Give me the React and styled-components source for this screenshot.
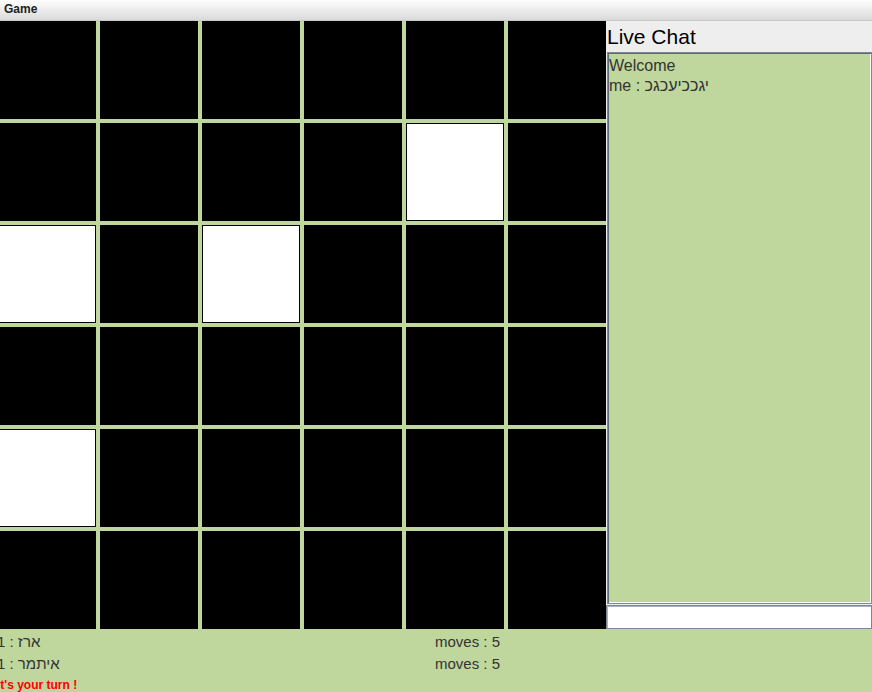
import styled, { createGlobalStyle } from "styled-components";

const GlobalStyle = createGlobalStyle`
  html, body {
    margin: 0;
    padding: 0;
    background: #bfd69d;
    overflow: hidden;
  }
`;

const whiteCells = ["1-4", "2-0", "2-2", "4-0"];

const App = () => {
  const rows = [0, 1, 2, 3, 4, 5];
  return (
    <Window>
      <GlobalStyle />
      <TitleBar>Game</TitleBar>
      <Main>
        <BoardArea>
          <Board>
            {rows.map(r =>
              rows.map(c => (
                <Cell key={`${r}-${c}`} $white={whiteCells.includes(`${r}-${c}`)} />
              ))
            )}
          </Board>
        </BoardArea>
        <ChatPanel>
          <ChatTitle>Live Chat</ChatTitle>
          <ChatLog>
            <div>Welcome</div>
            <div>me : יגככיעכגכ</div>
          </ChatLog>
          <ChatInput />
        </ChatPanel>
      </Main>
      <Footer>
        <Info>1 : ארז</Info>
        <Info>moves : 5</Info>
        <Info>1 : איתמר</Info>
        <Info>moves : 5</Info>
        <Turn>It's your turn !</Turn>
      </Footer>
    </Window>
  );
};

const Window = styled.div`
  width: 872px;
  height: 692px;
  display: flex;
  flex-direction: column;
  background: #bfd69d;
  overflow: hidden;
  font-family: "Liberation Sans", Arial, sans-serif;
`;

const TitleBar = styled.div`
  flex-shrink: 0;
  height: 20px;
  line-height: 18px;
  padding-left: 4px;
  border-bottom: 1px solid #c8c8c8;
  background: linear-gradient(#fefefe, #dadada);
  font-size: 12px;
  font-weight: 700;
  color: #222;
`;

const Main = styled.div`
  flex-shrink: 0;
  display: flex;
  height: 608px;
`;

const BoardArea = styled.div`
  width: 606px;
  overflow: hidden;
  background: #bfd69d;
`;

const Board = styled.div`
  display: grid;
  grid-template-columns: repeat(6, 98px);
  grid-auto-rows: 98px;
  gap: 4px;
  margin-left: -2px;
`;

const Cell = styled.div`
  box-sizing: border-box;
  border: 1px solid #000;
  background: ${p => (p.$white ? "#fff" : "#000")};
`;

const ChatPanel = styled.div`
  width: 266px;
  display: flex;
  flex-direction: column;
  background: #eeeeee;
`;

const ChatTitle = styled.div`
  flex-shrink: 0;
  height: 31px;
  line-height: 32px;
  padding-left: 1px;
  font-size: 21px;
  color: #000;
`;

const ChatLog = styled.div`
  flex-shrink: 0;
  box-sizing: border-box;
  height: 552px;
  margin-left: 1px;
  padding: 3px 1px;
  border: 1px solid #7d8894;
  box-shadow: inset 1px 1px 0 #5f6b72, inset -1px -1px 0 #fff;
  background: #bfd69d;
  font-size: 16px;
  line-height: 20px;
  color: #333;
`;

const ChatInput = styled.div`
  flex-shrink: 0;
  box-sizing: border-box;
  height: 24px;
  margin-top: 1px;
  border: 1px solid #7d8894;
  box-shadow: inset 1px 1px 0 #a9b2ba;
  background: #fff;
`;

const Footer = styled.div`
  flex: 1;
  min-height: 0;
  overflow: hidden;
  display: grid;
  grid-template-columns: 438px 1fr;
  grid-auto-rows: 22px;
  align-content: start;
  margin-left: -3px;
  padding-top: 2px;
  color: #333;
`;

const Info = styled.div`
  font-size: 15px;
  line-height: 22px;
`;

const Turn = styled.div`
  grid-column: 1 / -1;
  font-size: 12px;
  font-weight: 700;
  line-height: 21px;
  color: #f00;
`;

export default App;
